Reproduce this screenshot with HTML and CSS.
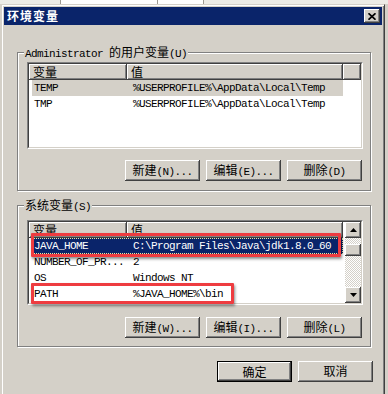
FILE: index.html
```html
<!DOCTYPE html>
<html lang="zh-CN">
<head>
<meta charset="UTF-8" />
<meta name="viewport" content="width=device-width, initial-scale=1" />
<title>环境变量</title>
<link rel="stylesheet" href="styles.css">
</head>
<body>
<div class="behind">
  <span class="tab t1"></span>
  <span class="tab t2"></span>
  <span class="tab t3"></span>
  <span class="tab t4"></span>
</div>

<div class="window">
  <div class="titlebar">
    <span class="title">环境变量</span>
    <span class="close">
      <svg width="8" height="7" viewBox="0 0 8 7"><path d="M0.5 0.3l7 6.4M7.5 0.3l-7 6.4" stroke="#000" stroke-width="1.7" fill="none"/></svg>
    </span>
  </div>

  <div class="client">
    <!-- 用户变量 -->
    <div class="group group-user">
      <span class="legend">Administrator <span class="zh">的用户变量</span>(U)</span>
      <div class="list list-user">
        <div class="list-inner">
          <div class="list-main">
            <div class="list-head">
              <span class="hcell col-name"><span class="zh">变量</span></span>
              <span class="hcell col-value"><span class="zh">值</span></span>
              <span class="hcell col-fill"></span>
            </div>
            <div class="row sel-inactive">
              <span class="cell col-name">TEMP</span>
              <span class="cell col-value">%USERPROFILE%\AppData\Local\Temp</span>
            </div>
            <div class="row">
              <span class="cell col-name">TMP</span>
              <span class="cell col-value">%USERPROFILE%\AppData\Local\Temp</span>
            </div>
          </div>
        </div>
      </div>
      <div class="btns">
        <button class="btn"><span class="zh">新建</span>(N)...</button>
        <button class="btn"><span class="zh">编辑</span>(E)...</button>
        <button class="btn"><span class="zh">删除</span>(D)</button>
      </div>
    </div>

    <!-- 系统变量 -->
    <div class="group group-sys">
      <span class="legend"><span class="zh">系统变量</span>(S)</span>
      <div class="list list-sys">
        <div class="list-inner">
          <div class="list-main">
            <div class="list-head">
              <span class="hcell col-name"><span class="zh">变量</span></span>
              <span class="hcell col-value"><span class="zh">值</span></span>
            </div>
            <div class="row sel-active">
              <span class="cell col-name">JAVA_HOME</span>
              <span class="cell col-value">C:\Program Files\Java\jdk1.8.0_60</span>
            </div>
            <div class="row">
              <span class="cell col-name">NUMBER_OF_PR...</span>
              <span class="cell col-value">2</span>
            </div>
            <div class="row">
              <span class="cell col-name">OS</span>
              <span class="cell col-value">Windows NT</span>
            </div>
            <div class="row">
              <span class="cell col-name">PATH</span>
              <span class="cell col-value">%JAVA_HOME%\bin</span>
            </div>
          </div>
          <div class="vscroll">
            <span class="sbtn">
              <svg width="7" height="4" viewBox="0 0 7 4"><path d="M3.5 0L7 4H0z" fill="#000"/></svg>
            </span>
            <span class="thumb"></span>
            <span class="track"></span>
            <span class="sbtn">
              <svg width="7" height="4" viewBox="0 0 7 4"><path d="M0 0h7L3.5 4z" fill="#000"/></svg>
            </span>
          </div>
        </div>
        <span class="mark mark-java"></span>
        <span class="mark mark-path"></span>
      </div>
      <div class="btns">
        <button class="btn"><span class="zh">新建</span>(W)...</button>
        <button class="btn"><span class="zh">编辑</span>(I)...</button>
        <button class="btn"><span class="zh">删除</span>(L)</button>
      </div>
    </div>

    <div class="footer">
      <button class="btn btn-default"><span class="zh">确定</span></button>
      <button class="btn"><span class="zh">取消</span></button>
    </div>
  </div>
</div>
</body>
</html>
```

FILE: styles.css
```css
body {
  margin: 0;
  width: 388px;
  height: 394px;
  overflow: hidden;
  background: #d4d0c8;
  font-family: "Liberation Mono", "Noto Sans CJK SC", monospace;
  font-size: 11px;
  letter-spacing: -0.6px;
  line-height: 16px;
  color: #000;
}
.zh {
  font-family: "Noto Sans CJK SC", sans-serif;
  font-size: 12px;
  letter-spacing: 0;
}

/* what is behind the dialog */
.behind {
  height: 4px;
  display: flex;
  background: #ecebe6;
}
.tab {
  height: 4px;
  border-right: 1px solid #9d9a92;
}
.t1 { width: 60px; }
.t2 { width: 46px; background: #fff; border-right-color: #fff; }
.t3 { width: 49px; background: #fff; }
.t4 { width: 45px; background: #fff; }

/* window frame */
.window {
  margin-left: 1px;
  width: 384px;
  box-sizing: border-box;
  border: 1px solid;
  border-color: #d4d0c8 #404040 #404040 #d4d0c8;
  box-shadow: inset 1px 1px #fff, inset -1px -1px #808080;
  padding: 2px;
  height: 400px;
}
.titlebar {
  height: 18px;
  background: #0a246a;
  display: flex;
  align-items: center;
  justify-content: space-between;
  padding: 0 2px 0 3px;
}
.title {
  font-family: "Noto Sans CJK SC", sans-serif;
  font-weight: 700;
  font-size: 12px;
  letter-spacing: 1px;
  color: #fff;
  line-height: 18px;
}
.close {
  width: 16px;
  height: 14px;
  background: #d4d0c8;
  box-shadow: inset -1px -1px #404040, inset 1px 1px #fff, inset -2px -2px #808080;
  display: flex;
  align-items: center;
  justify-content: center;
}

.client {
  padding: 27px 0 0 13px;
}

/* group boxes */
.group {
  position: relative;
  width: 354px;
  box-sizing: border-box;
  border: 1px solid #808080;
  box-shadow: inset 1px 1px #fff, 1px 1px #fff;
  padding: 9px 8px 0 9px;
}
.group-user { height: 139px; }
.group-sys { height: 142px; margin-top: 14px; padding-top: 14px; }
.legend {
  position: absolute;
  top: -7px;
  left: 6px;
  padding: 0 1px;
  background: #d4d0c8;
  line-height: 12px;
}

/* list views */
.list {
  position: relative;
  width: 334px;
  border: 1px solid;
  border-color: #808080 #fff #fff #808080;
}
.list-user { height: 85px; }
.list-sys { height: 83px; }
.list-inner {
  height: 100%;
  box-sizing: border-box;
  border: 1px solid;
  border-color: #404040 #d4d0c8 #d4d0c8 #404040;
  background: #fff;
  display: flex;
}
.list-main {
  flex: 1;
}
.list-head {
  display: flex;
  height: 16px;
}
.hcell {
  box-sizing: border-box;
  height: 16px;
  background: #d4d0c8;
  box-shadow: inset -1px -1px #404040, inset 1px 1px #fff, inset -2px -2px #808080;
  padding-left: 4px;
  line-height: 15px;
}
.hcell.col-name { width: 98px; }
.hcell.col-value { width: 216px; }
.hcell.col-fill { flex: 1; }

.row {
  display: flex;
  height: 16px;
  margin-left: 3px;
  width: 311px;
  line-height: 16px;
  white-space: nowrap;
}
.cell.col-name { width: 95px; padding-left: 2px; box-sizing: border-box; }
.cell.col-value { padding-left: 6px; }
.sel-inactive { background: #d4d0c8; }
.sel-active {
  background: #0a246a;
  color: #fff;
  outline: 1px dotted #f0e6a0;
  outline-offset: -1px;
}

/* scroll bar */
.vscroll {
  width: 16px;
  display: flex;
  flex-direction: column;
  background-color: #fff;
  background-image: repeating-conic-gradient(#d4d0c8 0 25%, #fff 0 50%);
  background-size: 2px 2px;
}
.sbtn, .thumb {
  height: 16px;
  box-sizing: border-box;
  background: #d4d0c8;
  box-shadow: inset -1px -1px #404040, inset 1px 1px #fff, inset -2px -2px #808080;
  display: flex;
  align-items: center;
  justify-content: center;
}
.thumb { margin-top: 6px; height: 12px; }
.track { flex: 1; }

/* red annotation boxes */
.mark {
  position: absolute;
  border: 3px solid #ee3c40;
  border-radius: 1px;
  box-shadow: 1px 2px 3px rgba(0, 0, 0, 0.45);
}
.mark-java { left: 3px; top: 12px; width: 304px; height: 18px; }
.mark-path { left: 3px; top: 62px; width: 197px; height: 15px; }

/* buttons */
.btns {
  display: flex;
  justify-content: flex-end;
  gap: 6px;
  margin-top: 11px;
  width: 335px;
}
.group-sys .btns { margin-top: 12px; }
.btn {
  width: 75px;
  height: 21px;
  padding: 0;
  border: none;
  background: #d4d0c8;
  box-shadow: inset -1px -1px #404040, inset 1px 1px #fff, inset -2px -2px #808080;
  font-family: "Liberation Mono", "Noto Sans CJK SC", monospace;
  font-size: 11px;
  letter-spacing: -0.6px;
  line-height: 19px;
  color: #000;
}
.btn-default {
  border: 1px solid #000;
}
.footer {
  display: flex;
  justify-content: flex-end;
  gap: 6px;
  margin-top: 14px;
  padding-right: 9px;
}
```
